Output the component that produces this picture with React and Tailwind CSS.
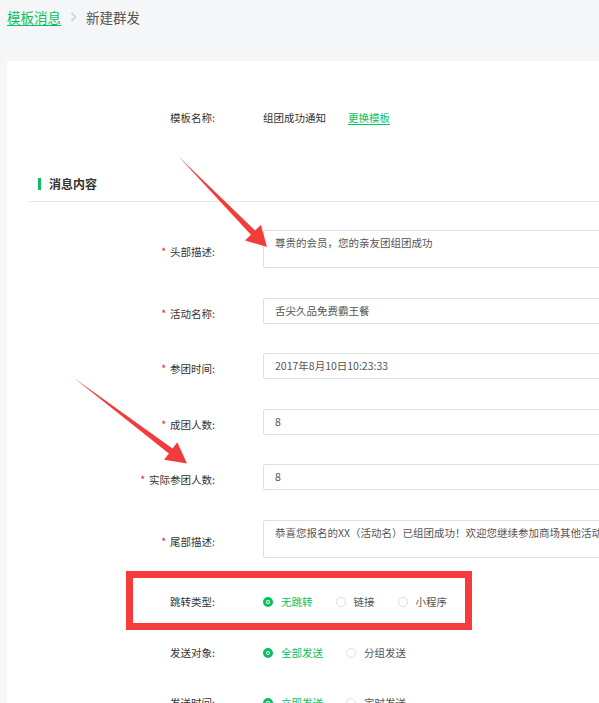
import React from 'react'

const rows = [
    { label: '头部描述', value: '尊贵的会员，您的亲友团组团成功', area: true, mt: 'mt-0' },
    { label: '活动名称', value: '舌尖久品免费霸王餐', mt: 'mt-[30px]' },
    { label: '参团时间', value: '2017年8月10日10:23:33', mt: 'mt-[29px]' },
    { label: '成团人数', value: '8', mt: 'mt-[30px]' },
    { label: '实际参团人数', value: '8', mt: 'mt-[29px]' },
    { label: '尾部描述', value: '恭喜您报名的XX（活动名）已组团成功！欢迎您继续参加商场其他活动', area: true, mt: 'mt-[30px]' },
]

function Radio({ checked, children }) {
    return (
        <div className="flex items-center gap-[8px]">
            {checked ? (
                <span className="w-[10px] h-[10px] rounded-full border-[3px] border-[#07c160] flex items-center justify-center">
                    <span className="w-[2px] h-[2px] rounded-full bg-[#07c160]" />
                </span>
            ) : (
                <span className="w-[10px] h-[10px] rounded-full border border-[#dcdfe6]" />
            )}
            <span className={checked ? 'text-[#07c160]' : 'text-[#555]'}>{children}</span>
        </div>
    )
}

function RadioRow({ label, options, mt }) {
    return (
        <div className={`flex items-center h-[18px] ${mt}`}>
            <div className="w-[208px] shrink-0 text-right text-[#333]">{label}:</div>
            <div className="ml-[48px] flex items-center gap-[23px]">
                {options.map((o, i) => (
                    <Radio key={o} checked={i === 0}>{o}</Radio>
                ))}
            </div>
        </div>
    )
}

export default function App() {
    return (
        <div className="relative w-full min-h-[703px] bg-[#f5f6f8] overflow-hidden font-['Noto_Sans_CJK_SC',sans-serif] text-[10.5px] leading-[18px]">
            <div className="h-[61px] pt-[8px] pl-[7px] flex items-start gap-[9px] text-[13.5px] leading-[18px]">
                <span className="text-[#07c160] underline underline-offset-2">模板消息</span>
                <svg width="7" height="18" viewBox="0 0 7 18">
                    <path d="M1.5 5 L5.5 9 L1.5 13" fill="none" stroke="#c0c4cc" strokeWidth="1.2" />
                </svg>
                <span className="text-[#555]">新建群发</span>
            </div>

            <div className="ml-[7px] w-[720px] bg-white pb-[40px]">
                <div className="flex items-center h-[18px] pt-[48px] box-content">
                    <div className="w-[208px] shrink-0 text-right text-[#333]">模板名称:</div>
                    <div className="ml-[48px] text-[#333]">组团成功通知</div>
                    <a className="ml-[22px] text-[#07c160] underline underline-offset-2">更换模板</a>
                </div>

                <div className="mt-[48px] ml-[21px] pl-[10px] pb-[8px] border-b border-[#e4e6eb] flex items-center gap-[8px]">
                    <span className="w-[3px] h-[12px] bg-[#07c160]" />
                    <span className="text-[12px] leading-[18px] font-bold text-[#333]">消息内容</span>
                </div>

                <div className="pt-[28px]">
                    {rows.map((r) => (
                        <div key={r.label} className={`flex items-center ${r.mt}`}>
                            <div className="w-[208px] shrink-0 text-right text-[#333] pt-[6px]">
                                <span className="text-[#f5222d] mr-[4px]">*</span>
                                {r.label}:
                            </div>
                            {r.area ? (
                                <div className="ml-[48px] w-[400px] h-[38px] border border-[#dcdfe6] rounded-[2px] px-[11px] pt-[5px] leading-[14px] text-[#555] whitespace-nowrap overflow-hidden">
                                    {r.value}
                                </div>
                            ) : (
                                <div className="ml-[48px] w-[400px] h-[26px] border border-[#dcdfe6] rounded-[2px] px-[11px] flex items-center text-[#555]">
                                    {r.value}
                                </div>
                            )}
                        </div>
                    ))}
                </div>

                <RadioRow label="跳转类型" options={['无跳转', '链接', '小程序']} mt="mt-[35px]" />
                <RadioRow label="发送对象" options={['全部发送', '分组发送']} mt="mt-[33px]" />
                <RadioRow label="发送时间" options={['立即发送', '定时发送']} mt="mt-[32px]" />
            </div>

            {/* annotations */}
            <div className="absolute left-[126px] top-[571px] w-[346px] h-[59px] border-[7px] border-[#f53b3b] pointer-events-none" />
            <svg className="absolute left-0 top-0 pointer-events-none" width="599" height="703">
                <polygon
                    points="179,157 255.1,230.6 260.9,225 267,247 245.1,240.4 250.9,234.8"
                    fill="#f23c3c"
                />
                <polygon
                    points="74,378 172.5,448.6 177.3,442.2 187,463.5 164.1,459.8 168.9,453.4"
                    fill="#f23c3c"
                />
            </svg>
        </div>
    )
}
